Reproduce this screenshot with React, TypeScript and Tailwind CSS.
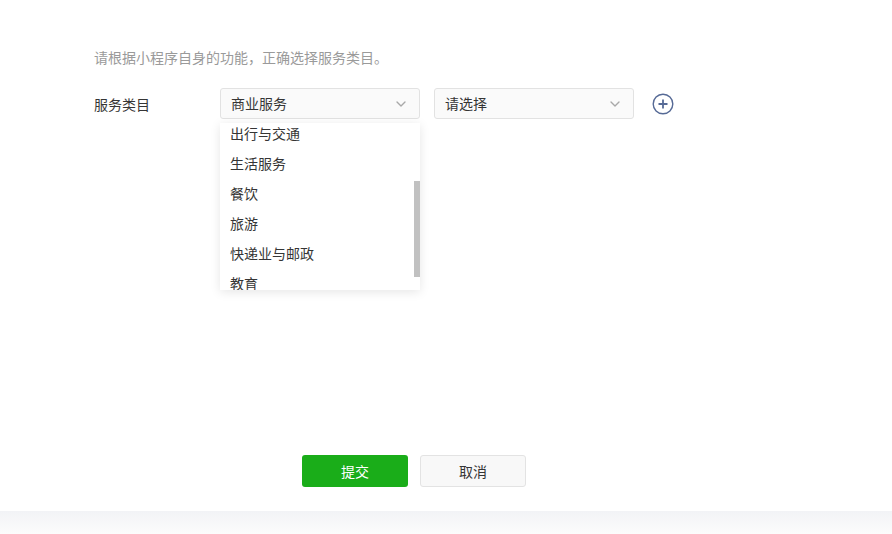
import { ChevronDown } from 'lucide-react'

const items = ['出行与交通', '生活服务', '餐饮', '旅游', '快递业与邮政', '教育']

function Select({ value, placeholder }: { value?: string; placeholder?: string }) {
  return (
    <div className="flex h-[31px] w-[200px] items-center justify-between rounded-[3px] border border-[#e2e2e2] bg-[#fafafa] pl-[10px] pr-[10px] text-[14px] text-[#353535]">
      <span>{value ?? placeholder}</span>
      <ChevronDown size={16} strokeWidth={2} className="text-[#a8a8a8]" />
    </div>
  )
}

export default function App() {
  return (
    <div className="flex min-h-[534px] flex-col font-['Noto_Sans_CJK_SC','Noto_Sans',sans-serif]">
      <div className="h-[511px] bg-white px-[94px] pt-[47px]">
        <p className="text-[14px] leading-[20px] text-[#9a9a9a]">请根据小程序自身的功能，正确选择服务类目。</p>

        <div className="mt-[21px] flex items-start">
          <label className="w-[126px] pt-[6px] text-[14px] leading-[20px] text-[#353535]">服务类目</label>

          <div className="relative">
            <Select value="商业服务" />
            {/* dropdown */}
            <div className="absolute left-0 top-[35px] z-10 h-[167px] w-[200px] overflow-hidden bg-white shadow-[0_2px_10px_rgba(0,0,0,0.1)]">
              <div className="-mt-[5px]">
                {items.map((it) => (
                  <div key={it} className="flex h-[30px] items-center px-[10px] text-[14px] text-[#353535]">
                    {it}
                  </div>
                ))}
              </div>
              <div className="absolute right-0 top-[58px] h-[96px] w-[6px] bg-[#c1c1c1]" />
            </div>
          </div>

          <div className="ml-[14px]">
            <Select placeholder="请选择" />
          </div>

          <button className="ml-[18px] mt-[5px]" aria-label="添加">
            <svg width="22" height="22" viewBox="0 0 22 22" fill="none" stroke="#566a96" strokeWidth="1.4">
              <circle cx="11" cy="11" r="9.8" />
              <path d="M11 6.5v9M6.5 11h9" strokeWidth="1.8" />
            </svg>
          </button>
        </div>

        <div className="ml-[208px] mt-[336px] flex gap-[12px]">
          <button className="h-[32px] w-[106px] rounded-[3px] bg-[#1aad19] text-[14px] text-white">提交</button>
          <button className="h-[32px] w-[106px] rounded-[3px] border border-[#e3e3e3] bg-[#f8f8f8] text-[14px] text-[#353535]">取消</button>
        </div>
      </div>
      <div className="h-[23px] bg-gradient-to-b from-[#f2f3f6] to-[#fcfcfc]" />
    </div>
  )
}
